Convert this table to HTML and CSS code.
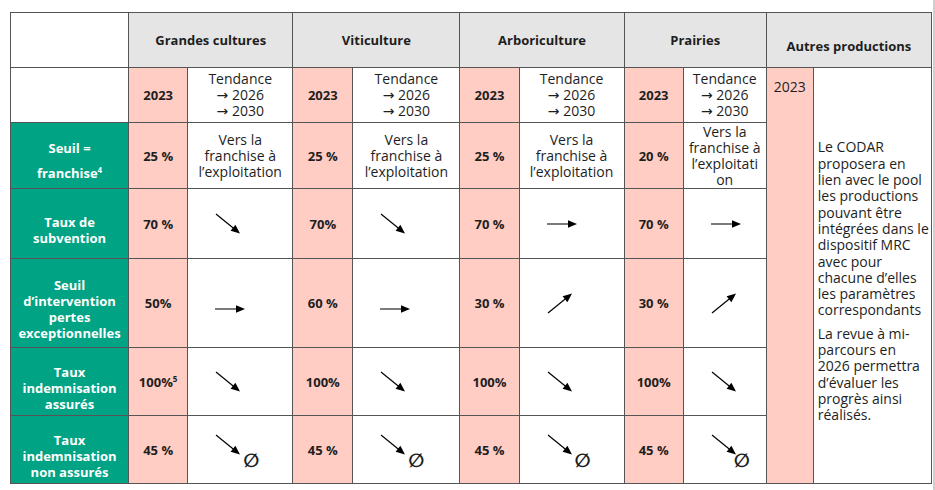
FILE: index.html
```html
<!DOCTYPE html>
<html lang="fr">
<head>
<meta charset="utf-8">
<title>Paramètres</title>
<link rel="stylesheet" href="styles.css">
</head>
<body>
<svg class="defs" aria-hidden="true">
  <symbol id="a-dr" viewBox="0 0 26 22">
    <line x1="1" y1="1" x2="18.5" y2="15.2" stroke="#000" stroke-width="1.2"/>
    <polygon points="25,20.5 15.6,17.75 20.4,11.85" fill="#000"/>
  </symbol>
  <symbol id="a-ur" viewBox="0 0 26 22">
    <line x1="1" y1="21" x2="18.5" y2="6.8" stroke="#000" stroke-width="1.2"/>
    <polygon points="25,1.5 15.6,4.25 20.4,10.15" fill="#000"/>
  </symbol>
  <symbol id="a-r" viewBox="0 0 30 10">
    <line x1="0" y1="5" x2="22" y2="5" stroke="#333" stroke-width="1.3"/>
    <polygon points="21,1.2 30,5 21,8.8" fill="#000"/>
  </symbol>
</svg>
<table class="grid">
  <colgroup>
    <col class="c-label">
    <col class="c-val"><col class="c-tend">
    <col class="c-val2"><col class="c-tend2">
    <col class="c-val"><col class="c-tend">
    <col class="c-val"><col class="c-tend3">
    <col class="c-year"><col class="c-text">
  </colgroup>
  <tr class="r-head">
    <td class="blank"></td>
    <th class="head" colspan="2">Grandes cultures</th>
    <th class="head" colspan="2">Viticulture</th>
    <th class="head" colspan="2">Arboriculture</th>
    <th class="head" colspan="2">Prairies</th>
    <th class="head head-low" colspan="2">Autres productions</th>
  </tr>
  <tr class="r-sub">
    <td class="blank"></td>
    <td class="val">2023</td>
    <td class="tend">Tendance<br>→ 2026<br>→ 2030</td>
    <td class="val">2023</td>
    <td class="tend">Tendance<br>→ 2026<br>→ 2030</td>
    <td class="val">2023</td>
    <td class="tend">Tendance<br>→ 2026<br>→ 2030</td>
    <td class="val">2023</td>
    <td class="tend">Tendance<br>→ 2026<br>→ 2030</td>
    <td class="year" rowspan="6">2023</td>
    <td class="note" rowspan="6">
      <p>Le CODAR<br>proposera en<br>lien avec le pool<br>les productions<br>pouvant être<br>intégrées dans le<br>dispositif MRC<br>avec pour<br>chacune d’elles<br>les paramètres<br>correspondants</p>
      <p>La revue à mi-<br>parcours en<br>2026 permettra<br>d’évaluer les<br>progrès ainsi<br>réalisés.</p>
    </td>
  </tr>
  <tr class="r-1">
    <th class="label label-wide">Seuil =<br>franchise<sup>4</sup></th>
    <td class="val">25&nbsp;%</td>
    <td class="tend">Vers la<br>franchise à<br>l’exploitation</td>
    <td class="val">25&nbsp;%</td>
    <td class="tend">Vers la<br>franchise à<br>l’exploitation</td>
    <td class="val">25&nbsp;%</td>
    <td class="tend">Vers la<br>franchise à<br>l’exploitation</td>
    <td class="val">20&nbsp;%</td>
    <td class="tend">Vers la<br>franchise à<br>l’exploitati<br>on</td>
  </tr>
  <tr class="r-2">
    <th class="label">Taux de<br>subvention</th>
    <td class="val">70&nbsp;%</td>
    <td class="arrow"><svg class="ic-d"><use href="#a-dr"/></svg></td>
    <td class="val">70%</td>
    <td class="arrow"><svg class="ic-d"><use href="#a-dr"/></svg></td>
    <td class="val">70&nbsp;%</td>
    <td class="arrow"><svg class="ic-r"><use href="#a-r"/></svg></td>
    <td class="val">70&nbsp;%</td>
    <td class="arrow"><svg class="ic-r"><use href="#a-r"/></svg></td>
  </tr>
  <tr class="r-3">
    <th class="label">Seuil<br>d’intervention<br>pertes<br>exceptionnelles</th>
    <td class="val">50%</td>
    <td class="arrow low"><svg class="ic-r"><use href="#a-r"/></svg></td>
    <td class="val">60&nbsp;%</td>
    <td class="arrow low"><svg class="ic-r"><use href="#a-r"/></svg></td>
    <td class="val">30&nbsp;%</td>
    <td class="arrow"><svg class="ic-d"><use href="#a-ur"/></svg></td>
    <td class="val">30&nbsp;%</td>
    <td class="arrow"><svg class="ic-d"><use href="#a-ur"/></svg></td>
  </tr>
  <tr class="r-4">
    <th class="label">Taux<br>indemnisation<br>assurés</th>
    <td class="val">100%<sup>5</sup></td>
    <td class="arrow"><svg class="ic-d"><use href="#a-dr"/></svg></td>
    <td class="val">100%</td>
    <td class="arrow"><svg class="ic-d"><use href="#a-dr"/></svg></td>
    <td class="val">100%</td>
    <td class="arrow"><svg class="ic-d"><use href="#a-dr"/></svg></td>
    <td class="val">100%</td>
    <td class="arrow"><svg class="ic-d"><use href="#a-dr"/></svg></td>
  </tr>
  <tr class="r-5">
    <th class="label">Taux<br>indemnisation<br>non assurés</th>
    <td class="val">45&nbsp;%</td>
    <td class="arrow"><span class="combo"><svg class="ic-d"><use href="#a-dr"/></svg><span class="empty">∅</span></span></td>
    <td class="val">45&nbsp;%</td>
    <td class="arrow"><span class="combo"><svg class="ic-d"><use href="#a-dr"/></svg><span class="empty">∅</span></span></td>
    <td class="val">45&nbsp;%</td>
    <td class="arrow"><span class="combo"><svg class="ic-d"><use href="#a-dr"/></svg><span class="empty">∅</span></span></td>
    <td class="val">45&nbsp;%</td>
    <td class="arrow"><span class="combo tight"><svg class="ic-d"><use href="#a-dr"/></svg><span class="empty">∅</span></span></td>
  </tr>
</table>
</body>
</html>
```

FILE: styles.css
```css
html, body {
  margin: 0;
  padding: 0;
  background: #ffffff;
}

body {
  min-height: 100vh;
  box-sizing: border-box;
  border-right: 2px solid #cfcfcf;
  padding: 12px 0 0 10px;
}

.defs {
  display: block;
  width: 0;
  height: 0;
  overflow: hidden;
}

.grid {
  border-collapse: collapse;
  table-layout: fixed;
  width: 922px;
  font-family: "Open Sans", "DejaVu Sans", sans-serif;
  font-size: 14px;
  line-height: 16px;
  color: #1e1e1e;
}

.grid td,
.grid th {
  border: 1px solid #555555;
  padding: 0;
  text-align: center;
  vertical-align: middle;
}

.c-label { width: 118px; }
.c-val { width: 59px; }
.c-val2 { width: 60px; }
.c-tend { width: 105px; }
.c-tend2 { width: 107px; }
.c-tend3 { width: 83px; }
.c-year { width: 47px; }
.c-text { width: 118px; }

.r-head { height: 55px; }
.r-sub { height: 55px; }
.r-1 { height: 66px; }
.r-2 { height: 70px; }
.r-3 { height: 89px; }
.r-4 { height: 68px; }
.r-5 { height: 68px; }

.blank {
  background: #ffffff;
}

.head {
  background: #e5e5e5;
  font-size: 13px;
  font-weight: 700;
}

.head-low {
  padding-top: 12px !important;
}

.val {
  background: #ffcdc4;
  font-size: 13px;
  font-weight: 700;
  white-space: nowrap;
}

.val sup {
  font-size: 8px;
  line-height: 0;
  vertical-align: 5px;
}

.tend {
  background: #ffffff;
  white-space: nowrap;
}

.label {
  background: #00a383;
  color: #ffffff;
  font-size: 13px;
  font-weight: 700;
  padding-top: 12px !important;
}

.label-wide {
  line-height: 25px;
  padding-top: 10px !important;
}

.label sup {
  font-size: 8px;
  line-height: 0;
  vertical-align: 5px;
}

.arrow {
  background: #ffffff;
  text-align: left !important;
  padding-left: 27px !important;
}

.arrow.low {
  padding-top: 12px !important;
}

.ic-d {
  display: block;
  width: 26px;
  height: 22px;
}

.ic-r {
  display: block;
  width: 30px;
  height: 10px;
}

.combo {
  display: flex;
  align-items: flex-start;
  padding-top: 4px;
}

.empty {
  font-family: "DejaVu Sans", sans-serif;
  font-weight: 700;
  font-size: 19px;
  line-height: 18px;
  margin-top: 17px;
  margin-left: 2px;
}

.combo.tight .empty {
  margin-left: -3px;
}

.year {
  background: #ffcdc4;
  vertical-align: top !important;
  padding-top: 11px !important;
  font-weight: 400;
}

.note {
  background: #ffffff;
  text-align: left !important;
  padding: 12px 0 0 4px !important;
  white-space: nowrap;
  line-height: 16.3px;
}

.note p {
  margin: 0;
}

.note p + p {
  margin-top: 7px;
}
```
